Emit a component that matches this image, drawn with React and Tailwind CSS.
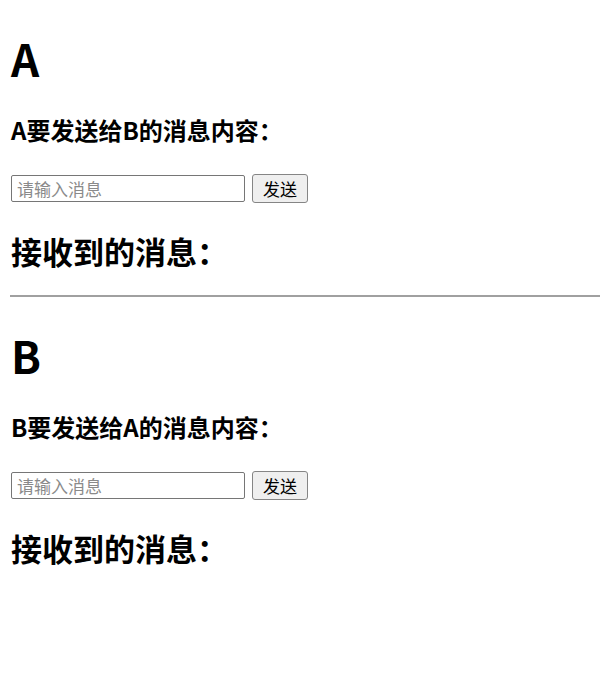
const font = { fontFamily: '"Noto Sans CJK SC", "Liberation Sans", sans-serif' };

function Panel({ me, other }) {
  return (
    <section className="flex flex-col">
      <h1 className="text-[44px] leading-[44px] font-bold text-black mt-[36px]">{me}</h1>
      <h3 className="text-[24px] leading-[28px] font-bold text-black mt-[36px]">
        {me}要发送给{other}的消息内容：
      </h3>
      <div className="flex items-center gap-[7px] mt-[30px]">
        <input
          type="text"
          placeholder="请输入消息"
          className="w-[234px] h-[27px] border border-[#767676] rounded-[2px] px-[5px] text-[17px] placeholder:text-[#8a8a8a] outline-none"
        />
        <button className="h-[29px] px-[10px] text-[17px] border border-[#858585] rounded-[3px] bg-[#efefef] text-black">
          发送
        </button>
      </div>
      <h2 className="text-[31px] leading-[36px] font-bold text-black mt-[30px]">接收到的消息：</h2>
    </section>
  );
}

export default function App() {
  return (
    <div className="bg-white flex flex-col pl-[11px] pb-[20px]" style={font}>
      <Panel me="A" other="B" />
      <hr className="mt-[26px] border-0 border-t-2 border-[#a0a0a0] -ml-[1px]" />
      <Panel me="B" other="A" />
    </div>
  );
}
